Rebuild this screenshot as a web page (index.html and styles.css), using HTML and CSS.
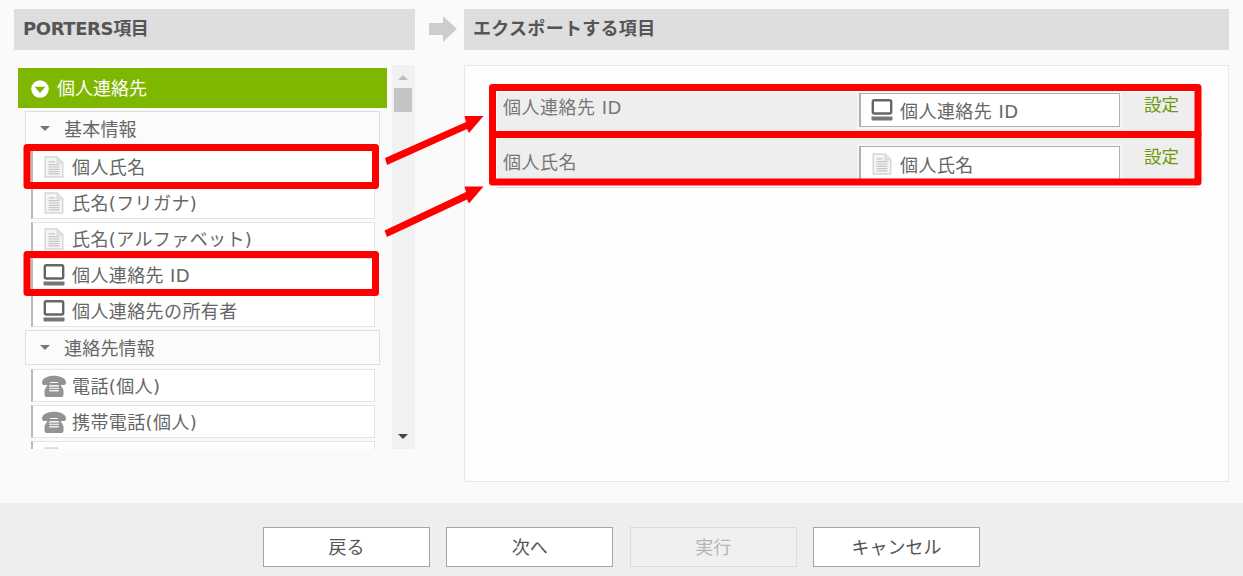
FILE: index.html
```html
<!DOCTYPE html>
<html lang="ja">
<head>
<meta charset="utf-8">
<title>エクスポートする項目</title>
<link rel="stylesheet" href="styles.css">
</head>
<body>
<svg class="defs" width="0" height="0" aria-hidden="true">
  <symbol id="i-doc" viewBox="0 0 22 24">
    <path d="M1.500 1h13l6 6.500v15.500h-19z" fill="#f5f5f5" stroke="#d6d6d6" stroke-width="1.600"/>
    <path d="M14.500 1v6.500h6" fill="#e4e4e4" stroke="#d6d6d6" stroke-width="1.200"/>
    <path d="M5 6.500h7M5 9.500h12M5 12h12M5 14.500h12M5 17h12M5 19.500h12" stroke="#c6c6c6" stroke-width="1.300" fill="none"/>
  </symbol>
  <symbol id="i-pc" viewBox="0 0 22 22">
    <rect x="1.800" y="1.200" width="18.400" height="13.300" rx="1.500" fill="#fff" stroke="#666" stroke-width="2.400"/>
    <path d="M0.500 17.500h21v3a1 1 0 0 1-1 1h-19a1 1 0 0 1-1-1z" fill="#777"/>
  </symbol>
  <symbol id="i-tel" viewBox="0 0 24 22">
    <path d="M0 7.500C0-1.500 24-1.500 24 7.500c0 1.500-.6 2.500-1.800 2.500h-4.700c-1.200 0-1.700-1-1.700-3H8.200c0 2-.5 3-1.700 3H1.800C.6 10 0 9 0 7.500z" fill="#939393"/>
    <path d="M6.500 8h11l4 7v5a2 2 0 0 1-2 2h-15a2 2 0 0 1-2-2v-5z" fill="#949494"/>
    <rect x="7" y="10" width="10" height="6.500" rx="1" fill="#f0f0f0"/>
    <path d="M7 12.200h10M7 14.400h10" stroke="#8a8a8a" stroke-width="1"/>
  </symbol>
</svg>

<main class="workspace">
  <section class="left-col">
    <h2 class="col-head col-head-left">PORTERS項目</h2>
    <div class="picker">
      <div class="tree">
        <div class="tree-root"><span class="root-icon"><svg viewBox="0 0 18 18"><circle cx="9" cy="9" r="8.800" fill="#fff"/><path d="M3.500 6.800h11L9 13z" fill="#7fb700"/></svg></span>個人連絡先</div>
        <div class="group group-first"><span class="caret"></span>基本情報</div>
        <ul class="items">
          <li class="item"><svg class="icon"><use href="#i-doc"/></svg>個人氏名</li>
          <li class="item"><svg class="icon"><use href="#i-doc"/></svg>氏名(フリガナ)</li>
          <li class="item"><svg class="icon"><use href="#i-doc"/></svg>氏名(アルファベット)</li>
          <li class="item"><svg class="icon"><use href="#i-pc"/></svg>個人連絡先 ID</li>
          <li class="item"><svg class="icon"><use href="#i-pc"/></svg>個人連絡先の所有者</li>
        </ul>
        <div class="group"><span class="caret"></span>連絡先情報</div>
        <ul class="items">
          <li class="item"><svg class="icon icon-tel"><use href="#i-tel"/></svg>電話(個人)</li>
          <li class="item"><svg class="icon icon-tel"><use href="#i-tel"/></svg>携帯電話(個人)</li>
          <li class="item"><svg class="icon"><use href="#i-doc"/></svg></li>
        </ul>
      </div>
      <div class="scrollbar">
        <span class="arrow-up"></span>
        <span class="thumb"></span>
        <span class="arrow-down"></span>
      </div>
    </div>
  </section>

  <div class="between"><svg viewBox="0 0 28 26" class="between-arrow"><path d="M0 7h14V0l14 13-14 13v-7H0z" fill="#cdcdcd"/></svg></div>

  <section class="right-col">
    <h2 class="col-head col-head-right">エクスポートする項目</h2>
    <div class="export-panel">
      <div class="rows">
        <div class="row">
          <span class="row-label">個人連絡先 ID</span>
          <div class="row-field"><svg class="icon"><use href="#i-pc"/></svg>個人連絡先 ID</div>
          <a class="row-link">設定</a>
        </div>
        <div class="row row-cut">
          <span class="row-label">個人氏名</span>
          <div class="row-field"><svg class="icon"><use href="#i-doc"/></svg>個人氏名</div>
          <a class="row-link">設定</a>
        </div>
      </div>
    </div>
  </section>
</main>

<footer class="actions">
  <button class="btn">戻る</button>
  <button class="btn">次へ</button>
  <button class="btn btn-off" disabled>実行</button>
  <button class="btn">キャンセル</button>
</footer>

<svg class="annot" width="1243" height="576" viewBox="0 0 1243 576" aria-hidden="true">
  <g fill="none" stroke="#f00" stroke-width="7" stroke-linejoin="round">
    <rect x="27" y="147.500" width="348.500" height="38"/>
    <rect x="27" y="254.500" width="348.500" height="38"/>
    <rect x="492.500" y="87.500" width="705.500" height="47"/>
    <rect x="492.500" y="134.500" width="705.500" height="47.500"/>
  </g>
  <g fill="#f00">
    <path d="M385 158 466 122 464.500 116 483.500 116 469 133 467 129 387 165z"/>
    <path d="M384.500 230.500 466 192 464.500 186.500 483.500 186.500 469 203.500 467 199.500 387 237z"/>
  </g>
</svg>
</body>
</html>
```
FILE: styles.css
```css
* { box-sizing: border-box; }
html, body { margin: 0; height: 100%; overflow: hidden; }
body {
  position: relative;
  display: flex;
  flex-direction: column;
  background: #fafafa;
  font-family: "DejaVu Sans", "Noto Sans CJK JP", sans-serif;
  font-size: 18px;
  color: #666;
}
.defs { position: absolute; }
.workspace {
  display: flex;
  height: 503px;
  padding: 9px 14px 0;
}
.left-col { width: 401px; flex: none; }
.right-col { width: 765px; flex: none; }
.between { width: 49px; flex: none; padding: 7px 0 0 14px; }
.between-arrow { display: block; width: 28px; height: 26px; }
.col-head {
  margin: 0;
  height: 41px;
  padding-left: 9px;
  background: #dedede;
  color: #555;
  font-size: 18px;
  font-weight: 700;
  line-height: 39px;
}
.col-head-left { letter-spacing: -0.400px; }
.col-head-right { letter-spacing: 0.300px; }
.picker {
  display: flex;
  justify-content: space-between;
  height: 384px;
  margin-top: 15px;
  overflow: hidden;
}
.tree { width: 373px; padding: 3px 0 0 4px; }
.tree-root {
  display: flex;
  align-items: center;
  height: 40px;
  padding: 2px 0 0 13px;
  background: #7fb700;
  color: #fff;
  line-height: 1;
}
.root-icon { width: 18px; height: 18px; margin-right: 8px; }
.root-icon svg { display: block; width: 18px; height: 18px; }
.group {
  display: flex;
  align-items: center;
  width: 355px;
  height: 35px;
  margin: 2px 0 0 7px;
  padding: 0 0 2px 14px;
  background: #fbfbfb;
  border: 1px solid #dedede;
  letter-spacing: 0.200px;
}
.group-first { margin-top: 3px; }
.caret {
  width: 0;
  height: 0;
  margin: 2px 14px 0 0;
  border: 5px solid transparent;
  border-top: 5px solid #777;
  border-bottom: 0;
}
.items {
  list-style: none;
  margin: 4px 0 0 13px;
  padding: 0;
}
.item {
  display: flex;
  align-items: center;
  width: 344px;
  height: 33px;
  margin-bottom: 3px;
  padding: 0 0 2px 10px;
  background: #fff;
  border: 1px solid #e4e4e4;
  border-left: 2px solid #bbb;
  letter-spacing: 0.400px;
}
.icon { flex: none; width: 22px; height: 22px; margin: 2px 7px 0 0; }
.icon-tel { width: 24px; margin-left: -1px; margin-right: 6px; }
.scrollbar {
  position: relative;
  width: 23px;
  background: #f1f1f1;
}
.thumb {
  position: absolute;
  left: 2px;
  top: 23px;
  width: 18px;
  height: 24px;
  background: #c4c4c4;
}
.arrow-up, .arrow-down {
  position: absolute;
  left: 6px;
  width: 0;
  height: 0;
  border: 5px solid transparent;
}
.arrow-up { top: 10px; border-top: 0; border-bottom: 5px solid #bdbdbd; }
.arrow-down { bottom: 10px; border-bottom: 0; border-top: 5px solid #444; }
.export-panel {
  height: 417px;
  margin-top: 15px;
  padding: 26px 31px 0 32px;
  background: #fdfdfd;
  border: 1px solid #e8e8e8;
}
.rows { border-bottom: 1px solid #d8d8d8; padding-bottom: 2px; }
.row {
  display: flex;
  height: 47px;
  background: #eee;
  padding-left: 6px;
}
.row-cut { height: 46px; }
.row-label { width: 356px; flex: none; padding-top: 3px; line-height: 26px; color: #777; letter-spacing: 0.500px; }
.row-cut .row-label { padding-top: 11px; }
.row-field {
  display: flex;
  align-items: center;
  width: 261px;
  height: 34px;
  margin-top: 1px;
  padding-left: 10px;
  background: #fff;
  border: 2px solid #b0b0b0;
  border-width: 1px 1px 1px 2px;
  box-shadow: 0 0 0 2px #f6f6f6;
  flex: none;
  letter-spacing: 0.450px;
}
.row-field .icon { margin-top: 0; }
.row-cut .row-field { height: 35px; margin-top: 7px; border-bottom: 0; }
.row-link {
  width: 84px;
  padding-top: 0;
  padding-left: 24px;
  line-height: 26px;
  color: #6d9a08;
  font-size: 17.500px;
}
.row-cut .row-link { padding-top: 5px; }
.actions {
  display: flex;
  justify-content: center;
  gap: 16.300px;
  height: 73px;
  padding-top: 24px;
  background: #eee;
}
.btn {
  width: 167px;
  height: 40px;
  padding: 0 0 3px;
  background: #fff;
  border: 1px solid #a5a5a5;
  color: #555;
  font: inherit;
  font-size: 18px;
}
.btn-off { background: #f0f0f0; border-color: #dcdcdc; color: #b5b5b5; }
.annot { position: absolute; left: 0; top: 0; pointer-events: none; }
```
